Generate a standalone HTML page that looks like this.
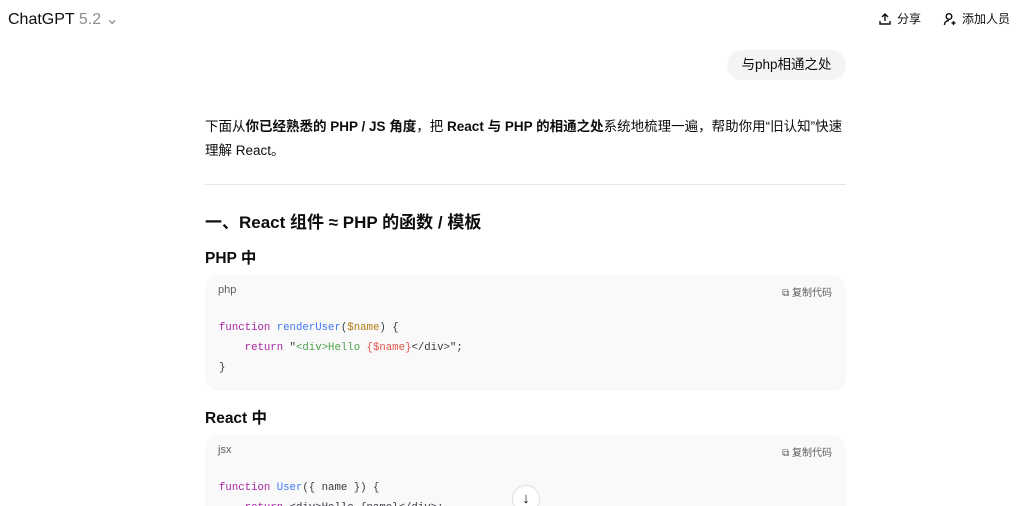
<!DOCTYPE html>
<html style="width:1024px;height:506px;overflow:hidden"><head><meta charset="utf-8"><style>
*{margin:0;padding:0;box-sizing:border-box}
body{width:1024px;height:506px;overflow:hidden;background:#fff;font-family:"Liberation Sans","Noto Sans CJK SC",sans-serif;color:#0d0d0d;position:relative}
.a{position:absolute}
.code{position:absolute;left:205px;width:641px;background:#f9f9f9;border-radius:14px}
.lang{position:absolute;left:13px;top:9px;font-size:11px;color:#5d5d5d}
.copy{position:absolute;right:14px;top:9px;font-size:10px;color:#5d5d5d;display:flex;align-items:center;gap:3px}
pre{position:absolute;left:14px;font-family:"Liberation Mono","Noto Sans CJK SC",monospace;font-size:10.7px;line-height:20px;color:#383a42}
.k{color:#a626a4}.f{color:#4078f2}.v{color:#b27a14}.s{color:#50a14f}.r{color:#e45649}
h2{position:absolute;left:205px;font-size:17px;font-weight:bold}
h3{position:absolute;left:205px;font-size:15.5px;font-weight:bold}
</style></head><body>
<div class="a" style="left:8px;top:9px;font-size:16px">ChatGPT <span style="color:#8f8f8f">5.2 ⌄</span></div>
<div class="a" style="left:878px;top:10px;font-size:12px;display:flex;align-items:center;gap:5px">
<svg width="14" height="14" viewBox="0 0 14 14" fill="none" stroke="#0d0d0d" stroke-width="1.4"><path d="M7 9V2M4 5l3-3 3 3M2 9v3h10V9"/></svg>分享</div>
<div class="a" style="left:943px;top:10px;font-size:12px;display:flex;align-items:center;gap:5px">
<svg width="14" height="14" viewBox="0 0 14 14" fill="none" stroke="#0d0d0d" stroke-width="1.4"><circle cx="6" cy="4.5" r="2.8"/><path d="M1.5 13c0-3 2-4.5 4.5-4.5M10.5 9v4M8.5 11h4"/></svg>添加人员</div>
<div class="a" style="left:727px;top:50px;height:30px;width:119px;background:#f4f4f4;border-radius:15px;font-size:13.5px;line-height:30px;text-align:center">与php相通之处</div>
<div class="a" style="left:205px;top:115px;width:645px;font-size:13.5px;line-height:24px">下面从<b>你已经熟悉的 PHP / JS 角度</b>，把 <b>React 与 PHP 的相通之处</b>系统地梳理一遍，帮助你用“旧认知”快速理解 React。</div>
<div class="a" style="left:205px;top:184px;width:641px;height:1px;background:#e5e5e5"></div>
<h2 style="top:208px">一、React 组件 ≈ PHP 的函数 / 模板</h2>
<h3 style="top:246px">PHP 中</h3>
<div class="code" style="top:275px;height:116px"><div class="lang">php</div><div class="copy">⧉ 复制代码</div>
<pre style="top:43px"><span class="k">function</span> <span class="f">renderUser</span>(<span class="v">$name</span>) {
    <span class="k">return</span> "<span class="s">&lt;div&gt;Hello </span><span class="r">{$name}</span>&lt;/div&gt;";
}</pre></div>
<h3 style="top:406px">React 中</h3>
<div class="code" style="top:435px;height:90px"><div class="lang">jsx</div><div class="copy">⧉ 复制代码</div>
<pre style="top:43px"><span class="k">function</span> <span class="f">User</span>({ name }) {
    <span class="k">return</span> &lt;div&gt;Hello {name}&lt;/div&gt;;</pre></div>
<div class="a" style="left:512px;top:485px;width:28px;height:28px;border-radius:50%;background:#fff;border:1px solid #e0e0e0;text-align:center;line-height:26px;font-size:15px">↓</div>
</body></html>
